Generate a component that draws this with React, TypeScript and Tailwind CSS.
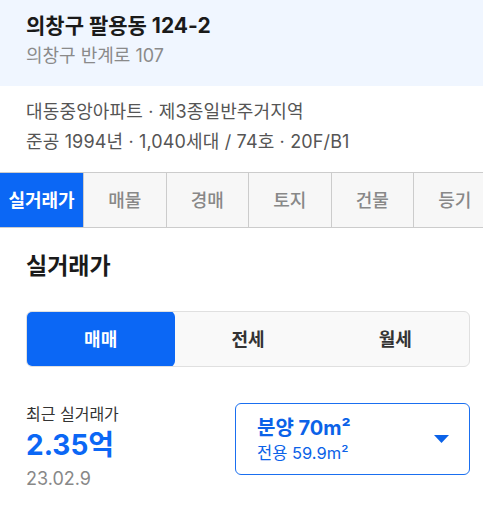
import React from "react";

const font = { fontFamily: "Inter, 'Noto Sans CJK KR', 'Noto Sans', sans-serif" };

export default function App() {
  const tabs = ["실거래가", "매물", "경매", "토지", "건물", "등기"];
  return (
    <div className="w-[483px] h-[517px] bg-white overflow-hidden" style={font}>
      <div className="bg-[#f0f6ff] px-[26px] pt-[12px] pb-[18px] h-[86px]">
        <div className="text-[21px] leading-[28px] font-bold text-[#1a1a1a]">의창구 팔용동 124-2</div>
        <div className="mt-[4px] text-[18px] leading-[24px] text-[#8a8a8a]">의창구 반계로 107</div>
      </div>
      <div className="px-[26px] pt-[11px] pb-[15px] text-[18px] leading-[30px] text-[#555] tracking-[0.15px]">
        <div>대동중앙아파트 · 제3종일반주거지역</div>
        <div>준공 1994년 · 1,040세대 / 74호 · 20F/B1</div>
      </div>
      <div className="flex h-[56px] border-y border-[#cccccc] bg-[#f7f7f7] overflow-hidden">
        {tabs.map((t, i) => (
          <div
            key={t}
            className={
              i === 0
                ? "shrink-0 w-[83px] flex items-center justify-center bg-[#0b67f5] text-white font-bold text-[18px]"
                : "shrink-0 w-[82.5px] flex items-center justify-center border-l border-[#cccccc] text-[#888] font-medium text-[18px]"
            }
          >
            {t}
          </div>
        ))}
      </div>
      <div className="pl-[26px] pr-[13px]">
        <div className="mt-[23px] text-[23px] leading-[30px] font-bold text-[#1a1a1a]">실거래가</div>
        <div className="mt-[30px] h-[56px] grid grid-cols-3 rounded-[6px] border border-[#e0e0e0] bg-[#f9f9f9] overflow-hidden">
          <div className="flex items-center justify-center bg-[#0b67f5] text-white font-bold text-[18px] rounded-[6px] -m-px">매매</div>
          <div className="flex items-center justify-center text-[#333] font-semibold text-[18px]">전세</div>
          <div className="flex items-center justify-center text-[#333] font-semibold text-[18px]">월세</div>
        </div>
        <div className="mt-[36px] flex justify-between">
          <div className="flex flex-col">
            <div className="text-[16px] leading-[22px] text-[#333]">최근 실거래가</div>
            <div className="mt-[3px] text-[28px] leading-[34px] font-bold text-[#0b67f5]">2.35억</div>
            <div className="mt-[6px] text-[18px] leading-[22px] text-[#888]">23.02.9</div>
          </div>
          <div className="w-[235px] h-[72px] rounded-[6px] border border-[#1a6ff0] flex items-center justify-between pl-[21px] pr-[20px]">
            <div className="flex flex-col">
              <div className="text-[20px] leading-[24px] font-bold text-[#0b62e8]">분양 70m²</div>
              <div className="mt-[3px] text-[16.5px] leading-[20px] text-[#0b62e8]">전용 59.9m²</div>
            </div>
            <svg width="15" height="8" viewBox="0 0 15 8">
              <path d="M0 0 H15 L7.5 8 Z" fill="#0b62e8" />
            </svg>
          </div>
        </div>
      </div>
    </div>
  );
}
